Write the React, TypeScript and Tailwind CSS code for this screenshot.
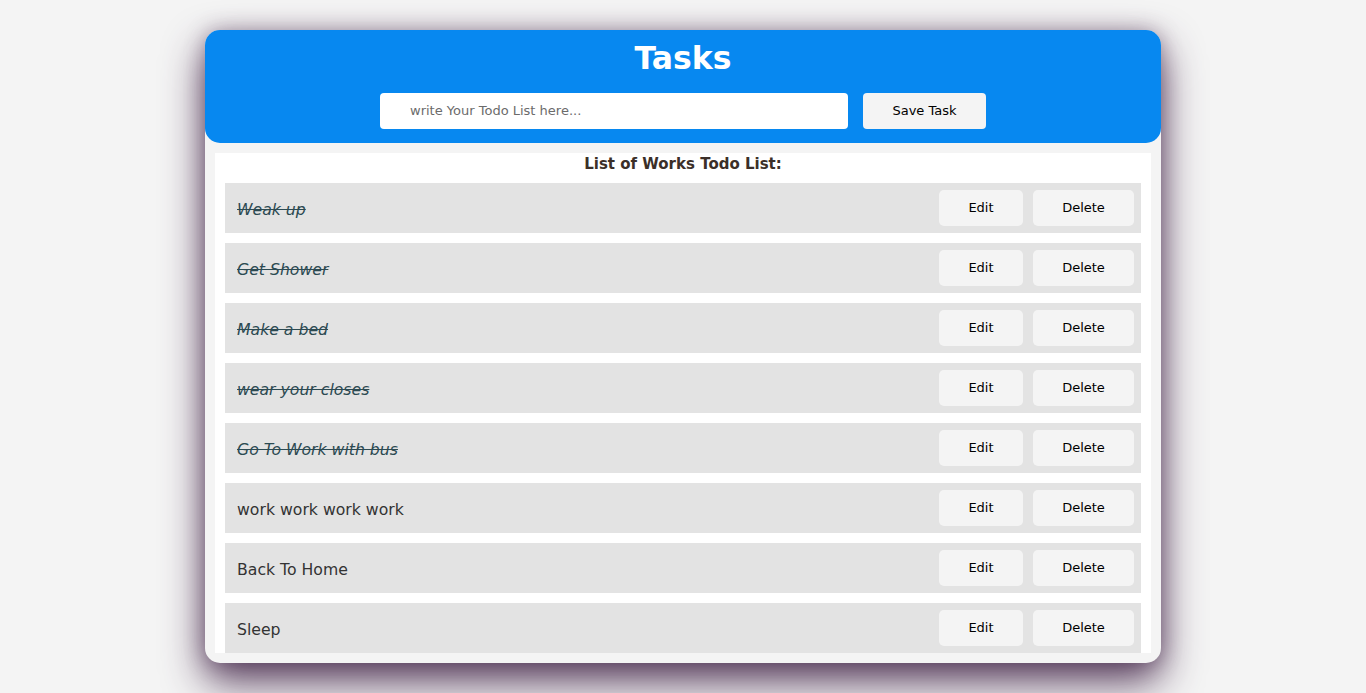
import React from "react";

const items = [
  { t: "Weak up", done: true },
  { t: "Get Shower", done: true },
  { t: "Make a bed", done: true },
  { t: "wear your closes", done: true },
  { t: "Go To Work with bus", done: true },
  { t: "work work work work", done: false },
  { t: "Back To Home", done: false },
  { t: "Sleep", done: false },
];

export default function App() {
  return (
    <div
      className="w-full h-[693px] bg-[#f4f4f4] pt-[30px] overflow-hidden"
      style={{ fontFamily: '"DejaVu Sans", sans-serif' }}
    >
      <div className="mx-auto w-[956px] h-[633px] bg-[#f4f4f4] rounded-[15px] shadow-[0_18px_40px_rgba(70,40,75,0.9),0_0_20px_rgba(70,40,75,0.35)] flex flex-col">
        <div className="bg-[#0788f0] rounded-[15px] h-[113px] flex flex-col items-center">
          <h1 className="text-white font-bold text-[31.5px] leading-none mt-[13px] h-[39px]">Tasks</h1>
          <div className="flex gap-[15px] mt-[11px]">
            <div className="w-[468px] h-[36px] bg-white rounded-[4px] flex items-center pl-[30px] text-[13px] text-[#6b6b6b]">
              write Your Todo List here...
            </div>
            <button className="w-[123px] h-[36px] bg-[#f4f4f4] rounded-[4px] text-[13px] text-black">Save Task</button>
          </div>
        </div>
        <div className="mx-[10px] mt-[10px] h-[500px] bg-white overflow-hidden px-[10px]">
          <div className="text-center font-bold text-[15px] text-[#3b2f28] h-[30px] leading-[20px] pt-[1px]">
            List of Works Todo List:
          </div>
          <div className="flex flex-col gap-[10px]">
            {items.map((it, i) => (
              <div key={i} className="h-[50px] shrink-0 bg-[#e3e3e3] flex items-center pl-[12px] pr-[7px]">
                <span
                  className={
                    "flex-1 text-[15.7px] pt-[3px] " +
                    (it.done ? "italic line-through text-[#2c4a52]" : "text-[#333333]")
                  }
                >
                  {it.t}
                </span>
                <button className="w-[84px] h-[36px] bg-[#f4f4f4] rounded-[5px] text-[13px] text-black">Edit</button>
                <button className="w-[101px] h-[36px] ml-[10px] bg-[#f4f4f4] rounded-[5px] text-[13px] text-black">
                  Delete
                </button>
              </div>
            ))}
          </div>
        </div>
      </div>
    </div>
  );
}
